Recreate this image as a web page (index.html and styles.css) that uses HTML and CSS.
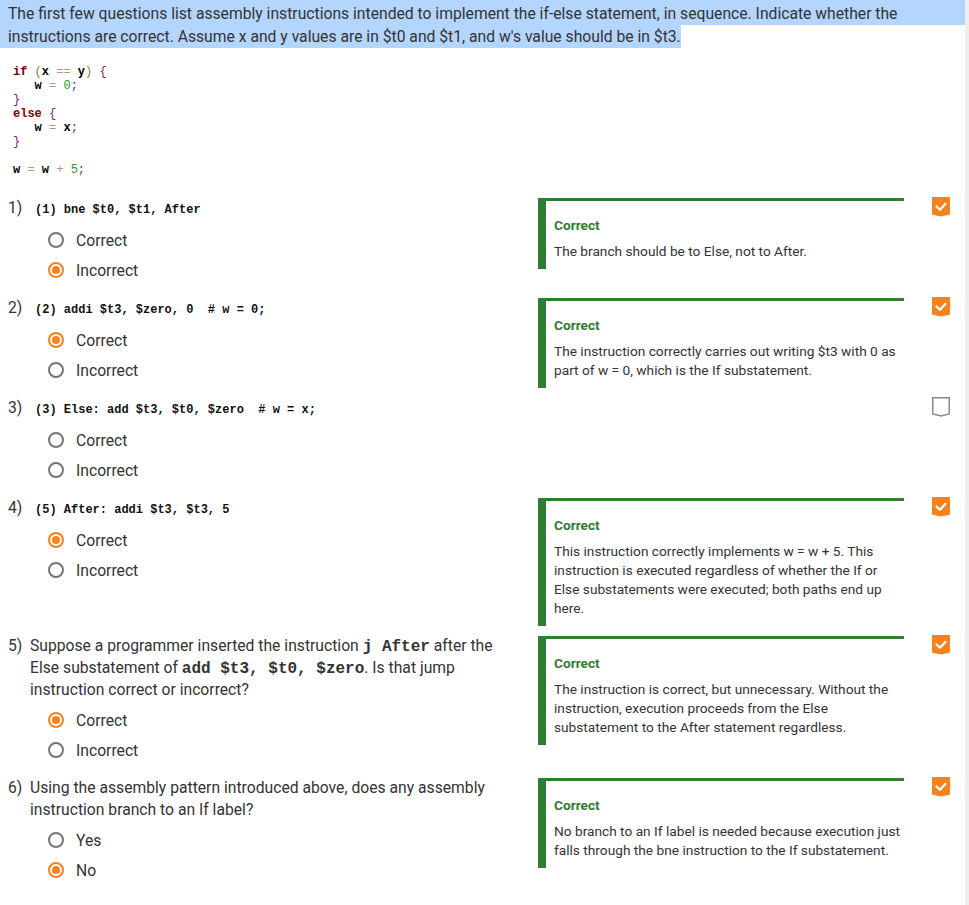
FILE: index.html
```html
<!DOCTYPE html>
<html>
<head>
<meta charset="utf-8">
<link rel="stylesheet" href="styles.css">
</head>
<body>
<div class="page">
  <p class="intro"><span class="sel">The first few questions list assembly instructions intended to implement the if-else statement, in sequence. Indicate whether the instructions are correct. Assume x and y values are in $t0 and $t1, and w's value should be in $t3.</span></p>
<pre class="code"><span class="k">if</span> <span class="p">(</span><span class="i">x</span> <span class="o">==</span> <span class="i">y</span><span class="p">)</span> <span class="b">{</span>
   <span class="i">w</span> <span class="o">=</span> <span class="n">0</span><span class="s">;</span>
<span class="b">}</span>
<span class="k">else</span> <span class="b">{</span>
   <span class="i">w</span> <span class="o">=</span> <span class="i">x</span><span class="s">;</span>
<span class="b">}</span>

<span class="i">w</span> <span class="o">=</span> <span class="i">w</span> <span class="o">+</span> <span class="n">5</span><span class="s">;</span></pre>

  <div class="q first">
    <div class="q-main">
      <div class="prompt c"><span class="num">1)</span><div class="ptext"><code class="asm">(1) bne $t0, $t1, After</code></div></div>
      <div class="opts">
        <div class="opt"><span class="radio"></span>Correct</div>
        <div class="opt"><span class="radio on"></span>Incorrect</div>
      </div>
    </div>
    <div class="fb">
      <div class="fb-title">Correct</div>
      <div class="fb-text">The branch should be to Else, not to After.</div>
    </div>
    <svg class="mark" viewBox="0 0 18 20"><path class="mark-bg" d="M0 0H18V17.5L9 19.5L0 17.5Z"/><path class="tick" d="M4.5 9.5L8 12.8L13.5 6.8"/></svg>
  </div>

  <div class="q">
    <div class="q-main">
      <div class="prompt c"><span class="num">2)</span><div class="ptext"><code class="asm">(2) addi $t3, $zero, 0  # w = 0;</code></div></div>
      <div class="opts">
        <div class="opt"><span class="radio on"></span>Correct</div>
        <div class="opt"><span class="radio"></span>Incorrect</div>
      </div>
    </div>
    <div class="fb">
      <div class="fb-title">Correct</div>
      <div class="fb-text">The instruction correctly carries out writing $t3 with 0 as part of w = 0, which is the If substatement.</div>
    </div>
    <svg class="mark" viewBox="0 0 18 20"><path class="mark-bg" d="M0 0H18V17.5L9 19.5L0 17.5Z"/><path class="tick" d="M4.5 9.5L8 12.8L13.5 6.8"/></svg>
  </div>

  <div class="q">
    <div class="q-main">
      <div class="prompt c"><span class="num">3)</span><div class="ptext"><code class="asm">(3) Else: add $t3, $t0, $zero  # w = x;</code></div></div>
      <div class="opts">
        <div class="opt"><span class="radio"></span>Correct</div>
        <div class="opt"><span class="radio"></span>Incorrect</div>
      </div>
    </div>
    <div class="fb-empty"></div>
    <svg class="mark" viewBox="0 0 18 20"><path class="mark-empty" d="M0.75 0.75H17.25V17L9 18.9L0.75 17Z"/></svg>
  </div>

  <div class="q">
    <div class="q-main">
      <div class="prompt c"><span class="num">4)</span><div class="ptext"><code class="asm">(5) After: addi $t3, $t3, 5</code></div></div>
      <div class="opts">
        <div class="opt"><span class="radio on"></span>Correct</div>
        <div class="opt"><span class="radio"></span>Incorrect</div>
      </div>
    </div>
    <div class="fb">
      <div class="fb-title">Correct</div>
      <div class="fb-text">This instruction correctly implements w = w + 5. This instruction is executed regardless of whether the If or Else substatements were executed; both paths end up here.</div>
    </div>
    <svg class="mark" viewBox="0 0 18 20"><path class="mark-bg" d="M0 0H18V17.5L9 19.5L0 17.5Z"/><path class="tick" d="M4.5 9.5L8 12.8L13.5 6.8"/></svg>
  </div>

  <div class="q">
    <div class="q-main">
      <div class="prompt"><span class="num">5)</span><div class="ptext">Suppose a programmer inserted the instruction <code class="inl">j After</code> after the Else substatement of <code class="inl">add $t3, $t0, $zero</code>. Is that jump instruction correct or incorrect?</div></div>
      <div class="opts">
        <div class="opt"><span class="radio on"></span>Correct</div>
        <div class="opt"><span class="radio"></span>Incorrect</div>
      </div>
    </div>
    <div class="fb">
      <div class="fb-title">Correct</div>
      <div class="fb-text">The instruction is correct, but unnecessary. Without the instruction, execution proceeds from the Else substatement to the After statement regardless.</div>
    </div>
    <svg class="mark" viewBox="0 0 18 20"><path class="mark-bg" d="M0 0H18V17.5L9 19.5L0 17.5Z"/><path class="tick" d="M4.5 9.5L8 12.8L13.5 6.8"/></svg>
  </div>

  <div class="q">
    <div class="q-main">
      <div class="prompt"><span class="num">6)</span><div class="ptext">Using the assembly pattern introduced above, does any assembly instruction branch to an If label?</div></div>
      <div class="opts">
        <div class="opt"><span class="radio"></span>Yes</div>
        <div class="opt"><span class="radio on"></span>No</div>
      </div>
    </div>
    <div class="fb">
      <div class="fb-title">Correct</div>
      <div class="fb-text">No branch to an If label is needed because execution just falls through the bne instruction to the If substatement.</div>
    </div>
    <svg class="mark" viewBox="0 0 18 20"><path class="mark-bg" d="M0 0H18V17.5L9 19.5L0 17.5Z"/><path class="tick" d="M4.5 9.5L8 12.8L13.5 6.8"/></svg>
  </div>
</div>
</body>
</html>
```

FILE: styles.css
```css
html, body {
  margin: 0;
  padding: 0;
  background: #fff;
}
body {
  font-family: Roboto, "Liberation Sans", Arial, sans-serif;
  color: #333;
}
.page {
  box-sizing: border-box;
  width: 969px;
  min-height: 905px;
  padding: 0 0 20px 8px;
  border-right: 4px solid #eeeeee;
}
.intro {
  margin: 0 0 0 -8px;
  padding: 2px 0 0 8px;
  font-size: 15.7px;
  line-height: 23px;
  background:
    linear-gradient(#b4d5fe, #b4d5fe) 0 0 / 100% 25px no-repeat,
    linear-gradient(#b4d5fe, #b4d5fe) 0 0 / 8px 48px no-repeat;
}
.sel {
  background: #b4d5fe;
  padding: 2px 0;
}
.code {
  margin: 17px 0 0 5px;
  font-family: "Liberation Mono", "Courier New", monospace;
  font-size: 12px;
  line-height: 14px;
  color: #000;
}
.code .k { color: #7f0000; font-weight: bold; }
.code .i { color: #000; font-weight: bold; }
.code .o { color: #a39d7d; }
.code .p { color: #8a7a50; }
.code .b { color: #7a237a; }
.code .n { color: #2a9a2a; }
.code .s { color: #8a2f62; }

.q {
  display: grid;
  grid-template-columns: 530px 366px auto;
  align-items: start;
  margin-top: 9px;
}
.q.first {
  margin-top: 20px;
}
.q-main {
  padding-bottom: 3px;
}
.prompt {
  display: flex;
  font-size: 15.7px;
  line-height: 22px;
  padding-right: 30px;
}
.prompt.c {
  padding-bottom: 2px;
}
.num {
  flex: none;
  width: 22px;
}
.ptext {
  flex: 1;
}
.asm {
  font-family: "Liberation Mono", "Courier New", monospace;
  font-size: 12px;
  line-height: 1;
  font-weight: bold;
  color: #111;
  margin-left: 5px;
  white-space: pre;
}
.inl {
  font-family: "Liberation Mono", "Courier New", monospace;
  font-size: 16px;
  line-height: 1;
  font-weight: bold;
  color: #333;
}
.opts {
  margin-top: 4px;
  padding-left: 40px;
}
.opt {
  display: flex;
  align-items: center;
  height: 30px;
  font-size: 15.7px;
}
.radio {
  position: relative;
  box-sizing: border-box;
  flex: none;
  width: 16px;
  height: 16px;
  border: 2px solid #757575;
  border-radius: 50%;
  margin-right: 12px;
}
.radio.on {
  border-color: #f5821f;
}
.radio.on::after {
  content: "";
  position: absolute;
  top: 2px;
  left: 2px;
  right: 2px;
  bottom: 2px;
  border-radius: 50%;
  background: #f5821f;
}
.fb {
  margin-top: 1px;
  border-top: 3px solid #2e7d32;
  border-left: 8px solid #2e7d32;
  padding: 14px 0 8px 8px;
}
.fb-title {
  font-size: 13.7px;
  line-height: 20px;
  font-weight: bold;
  color: #2e7d32;
}
.fb-text {
  margin-top: 7px;
  font-size: 13.7px;
  line-height: 19px;
  color: #333;
}
.mark {
  display: block;
  width: 18px;
  height: 20px;
  margin-left: 28px;
}
.mark-bg {
  fill: #f5821f;
}
.tick {
  fill: none;
  stroke: #fff;
  stroke-width: 2.2;
  stroke-linecap: round;
  stroke-linejoin: round;
}
.mark-empty {
  fill: #fff;
  stroke: #8a8a8a;
  stroke-width: 1.5;
}
```
